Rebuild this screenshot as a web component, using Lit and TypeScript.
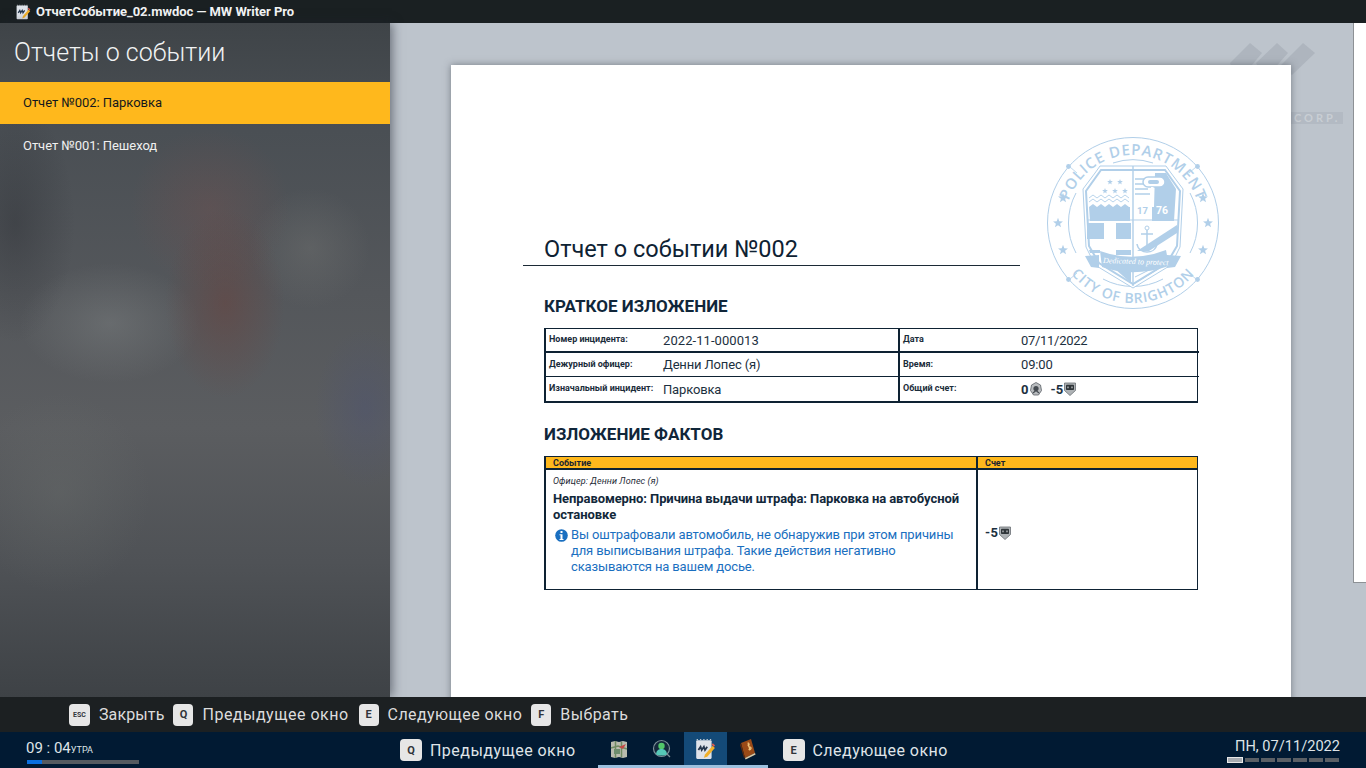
import { LitElement, html, css, svg } from "lit";
import { customElement } from "lit/decorators.js";

const BLUE = "#b1cfe9";

const docIcon = (s: number) => html`<svg width=${s} height=${s} viewBox="0 0 20 20">
  <rect x="2" y="2" width="14" height="17" rx="1" fill="#dfe3ea"/>
  <path d="M3 2v-1M6 2v-1M9 2v-1M12 2v-1M15 2v-1" stroke="#c5cbd2" stroke-width="1.2"/>
  <path d="M4 11l2-3 1 3 2-3 1 3 2-3" fill="none" stroke="#26374d" stroke-width="1.6"/>
  <path d="M9 18l1-3 7-8 2 2-7 8z" fill="#f1b02a"/>
  <path d="M16 6l1.2-1.2 2 2L18 8z" fill="#e25a4c"/>
</svg>`;

const mapIcon = html`<svg width="18" height="20" viewBox="0 0 18 20">
  <path d="M1 3l4-1 4 1 4-1 4 1v15l-4 1-4-1-4 1-4-1z" fill="#b9bbae"/>
  <path d="M1 9l7-2 9 3M5.500 2v17M11.500 3v15" stroke="#6f8a62" stroke-width="1.500" fill="none"/>
  <path d="M4 10h6v5h-6z" fill="#6d8c6d"/>
  <path d="M9 8l7-3-3 5z" fill="#c64a45"/>
</svg>`;

const personIcon = html`<svg width="20" height="20" viewBox="0 0 20 20">
  <circle cx="9.500" cy="9.500" r="8" fill="#14283c" stroke="#7d8e98" stroke-width="1.200"/>
  <circle cx="9.500" cy="7" r="3.200" fill="#52c66a"/>
  <path d="M4 15c.5-4 3-5 5.500-5s5 1 5.500 5c-2 2-9 2-11 0z" fill="#56c8b8"/>
  <path d="M15 15l3 3" stroke="#7d8e98" stroke-width="1.200"/>
</svg>`;

const bookIcon = html`<svg width="18" height="22" viewBox="0 0 18 22">
  <path d="M2 5l10-4 4 14-10 5z" fill="#9a4a17"/>
  <path d="M2 5l4 15-1 0-4-13z" fill="#5e2a0e"/>
  <path d="M6 20l10-5 .6 1.500-10 5z" fill="#d9c9a6"/>
  <path d="M11 6c-3 0-2 2.500 0 3s1 3-1.500 2.500M9 4.500l2 8" stroke="#f0c27a" stroke-width="1.200" fill="none"/>
</svg>`;

const badgeAlt = html`<svg class="mini" width="12" height="14" viewBox="0 0 12 14">
  <path d="M6 .5l4.500 2.500 1 5.500-3 4.500h-5l-3-4.500 1-5.500z" fill="#b9bcbf" stroke="#5b6167" stroke-width=".8"/>
  <circle cx="6" cy="6.500" r="2.600" fill="#454b51"/>
  <path d="M3 11l3-2.500 3 2.500" stroke="#454b51" stroke-width="1.200" fill="none"/>
</svg>`;

const shieldBadge = html`<svg class="mini" width="12" height="14" viewBox="0 0 12 14">
  <path d="M.5 1h11v7.500l-5.500 5-5.500-5z" fill="#aeb2b5" stroke="#6b7075" stroke-width=".8"/>
  <rect x="2" y="2.800" width="8" height="5.200" rx=".8" fill="#2f3539"/>
  <path d="M4 4.500v1.800M8 4.500v1.800" stroke="#d8dadc" stroke-width="1.100"/>
</svg>`;

const star = (x: number, y: number, r: number) => {
  const pts: string[] = [];
  for (let i = 0; i < 10; i++) {
    const a = -Math.PI / 2 + (i * Math.PI) / 5;
    const rr = i % 2 ? r * 0.42 : r;
    pts.push(`${(x + rr * Math.cos(a)).toFixed(2)},${(y + rr * Math.sin(a)).toFixed(2)}`);
  }
  return svg`<polygon points=${pts.join(" ")} fill=${BLUE}/>`;
};

const seal = html`<svg class="seal" width="174" height="174" viewBox="-87 -87 174 174">
  <defs>
    <path id="topArc" d="M -68 0 A 68 68 0 0 1 68 0"/>
    <path id="botArc" d="M -80 0 A 80 80 0 0 0 80 0"/>
  </defs>
  <circle r="85.500" fill="#fff" stroke=${BLUE} stroke-width="1"/>
  <path d="M -57 -30 A 63.500 63.500 0 0 0 -57 30 M 57 -30 A 63.500 63.500 0 0 1 57 30 M -20 -60 A 63 63 0 0 1 20 -60 M -30 56 A 64 64 0 0 0 30 56"
    fill="none" stroke=${BLUE} stroke-width="1"/>
  <path d="M -63 -56 L -56 -50 M 63 -56 L 56 -50 M -63 56 L -56 50 M 63 56 L 56 50" stroke=${BLUE} stroke-width=".8"/>
  ${[[-64.500, -56.500], [64.500, -56.500], [-64.500, 56.500], [64.500, 56.500]].map(
    ([x, y]) => svg`<circle cx=${x} cy=${y} r="2.400" fill=${BLUE}/>`
  )}
  ${[[-70, -25], [-75, 0], [-70, 27], [70, -25], [75, 0], [70, 27]].map(([x, y]) => star(x, y, 5.200))}
  <text class="ring" font-size="15"><textPath href="#topArc" startOffset="50%" text-anchor="middle">POLICE DEPARTMENT</textPath></text>
  <text class="ring" font-size="14"><textPath href="#botArc" startOffset="50%" text-anchor="middle">CITY OF BRIGHTON</textPath></text>

  <path d="M -33 -57 H 33 L 38 -50 L 50 -34 L 47 24 L 38 42 L 0 65 L -38 42 L -47 24 L -50 -34 L -38 -50 Z" fill="#fff" stroke=${BLUE} stroke-width="1"/>
  <path d="M -32 -53 H 32 L 47 -32 L 44 23 L 34 40 L 0 61 L -34 40 L -44 23 L -47 -32 Z" fill="none" stroke=${BLUE} stroke-width="2"/>

  <path d="M -44 -16 l 4 -3 4 3 4 -3 4 3 4 -3 4 3 4 -3 4 3 4 -3 4 3 1 0 V -2 H -43 Z" fill=${BLUE}/>
  <path d="M -44 -21 l 4 -3 4 3 4 -3 4 3 4 -3 4 3 4 -3 4 3 4 -3 4 3 M -44 -25 l 4 -3 4 3 4 -3 4 3 4 -3 4 3 4 -3 4 3 4 -3 4 3" fill="none" stroke=${BLUE} stroke-width=".9"/>
  ${[[-23, -41], [-13, -41], [-28, -32], [-18, -32], [-8, -32]].map(([x, y]) => star(x, y, 3))}
  <path d="M 0 -57 V 63" stroke=${BLUE} stroke-width="1.400"/>
  <path d="M -45 -3 H 45" stroke=${BLUE} stroke-width="1.200"/>
  <path d="M 22 -50 H 33 L 43 -34 L 41 -2 H 19 V -16 H 21 Z" fill=${BLUE}/>
  <path d="M 2 -44 H 14 M 2 -39 H 13 M 2 -34 H 15 M 2 -29 H 17" stroke=${BLUE} stroke-width="1.300"/>
  <rect x="10" y="-46" width="22" height="10" rx="5" fill="#fff" stroke=${BLUE} stroke-width="1.500"/>
  <rect x="15" y="-43" width="11" height="4" rx="2" fill=${BLUE}/>
  <rect x="18" y="-36" width="2.500" height="10" fill="#fff"/>
  <text class="yr" x="4" y="-9" font-size="9.500" fill=${BLUE}>17</text>
  <text class="yr" x="23" y="-9" font-size="10.500" fill="#fff">76</text>
  ${[[-46, 0, 17, 16], [-17, 0, 15, 16]].map(
    ([x, y, w, h]) => svg`<rect x=${x} y=${y} width=${w} height=${h} fill=${BLUE}/>`
  )}
  <path d="M -17 27 H -2 V 32 H -17 Z M -44 27 L -33 27 L -33 30 L -43 30 Z" fill=${BLUE}/>
  <path d="M 4 28 L 44 2 L 44 10 L 16 28 Z" fill=${BLUE}/>
  <circle cx="14" cy="5" r="2" fill="#fff" stroke=${BLUE} stroke-width="1"/>
  <path d="M 14 7 V 27 M 8 11 H 20 M 4 21 C 5 27 10 29 14 29 C 18 29 23 27 24 21" fill="none" stroke=${BLUE} stroke-width="1.500"/>
  <path d="M -18 46 L -2 47 L -2 60 Z" fill=${BLUE}/>
  <path d="M 2 60 L 30 43 M 2 54 L 22 44" fill="none" stroke=${BLUE} stroke-width="1"/>
  <path d="M -48 33 L -34 32 L -34 45 L -42 44 Z M 48 33 L 34 32 L 34 45 L 42 44 Z" fill=${BLUE}/>
  <path d="M -33 28 Q 0 40 33 27 L 36 43 Q 0 55 -31 44 Z" fill=${BLUE}/>
  <text class="motto" x="-30" y="41" font-size="8" fill="#fff" transform="rotate(2 0 40)">Dedicated to protect</text>
</svg>`;

@customElement("app-root")
export class AppRoot extends LitElement {
  static styles = css`
    :host { display: block; width: 1366px; height: 768px; overflow: hidden; font-family: Roboto, "Liberation Sans", sans-serif; }
    .app { display: flex; flex-direction: column; height: 768px; }
    .title { height: 23px; flex: none; background: #1a2022; color: #f3f4f5; display: flex; align-items: center; font-size: 13px; font-weight: 700; padding-left: 15px; gap: 5px; letter-spacing: -.04px; }
    .title svg { width: 16px; height: 16px; }
    .body { flex: 1; display: flex; min-height: 0; position: relative; }
    .side { width: 390px; flex: none; z-index: 1; box-shadow: 2px 0 10px rgba(30,35,45,.55); display: flex; flex-direction: column; color: #fff;
      background:
        radial-gradient(ellipse 60px 95px at 225px 280px, rgba(110,62,55,.42), transparent),
        radial-gradient(ellipse 80px 80px at 210px 185px, rgba(125,80,76,.3), transparent),
        radial-gradient(ellipse 90px 60px at 110px 300px, rgba(145,150,150,.3), transparent),
        radial-gradient(ellipse 60px 60px at 310px 225px, rgba(135,135,130,.24), transparent),
        radial-gradient(ellipse 50px 80px at 365px 385px, rgba(75,82,115,.42), transparent),
        radial-gradient(ellipse 90px 100px at 60px 470px, rgba(120,125,120,.22), transparent),
        radial-gradient(ellipse 60px 120px at 15px 200px, rgba(30,32,38,.3), transparent),
        linear-gradient(180deg, #3f4448 0%, #4a4f54 16%, #54575b 40%, #5b5d60 60%, #4f5256 80%, #3e4246 100%);
    }
    .side h1 { margin: 0; font-weight: 300; font-size: 25px; line-height: 59px; padding-left: 14px; color: #f1f3f4; }
    .item { height: 42px; padding: 0 0 2px 23px; box-sizing: border-box; display: flex; align-items: center; font-size: 13px; letter-spacing: -.04px; color: #f0f0f0; }
    .item.on { background: #ffb81c; color: #14181c; }
    .item + .item { height: 44px; }
    .main { flex: 1; background: #bdc4cc; position: relative; overflow: hidden; }
    .logo { position: absolute; left: 835px; top: 20px; }
    .corp { position: absolute; left: 901px; top: 89px; width: 52px; box-sizing: border-box; background: #b3bac3; color: #c9ced4; font: 700 11px Lato, Roboto, sans-serif; letter-spacing: 3px; padding-left: 3px; height: 12px; line-height: 12px; white-space: nowrap; overflow: hidden; }
    .scroll { position: absolute; right: 0; top: 0; width: 13px; height: 560px; background: #fff; border-left: 1px solid #8d9195; border-bottom: 1px solid #8d9195; box-sizing: border-box; }
    .page { position: absolute; left: 61px; top: 42px; width: 840px; height: 700px; background: #fff; box-shadow: 0 0 7px rgba(60,65,75,.55); color: #0e2233; box-sizing: border-box; padding: 0 93px; }
    .seal { position: absolute; left: 595px; top: 71px; }
    .ring { font-family: "Open Sans", Lato, Roboto, sans-serif; font-weight: 600; fill: #b1cfe9; letter-spacing: .8px; }
    .yr { font-family: Roboto, sans-serif; font-weight: 700; }
    .motto { font-family: "Liberation Serif", serif; font-style: italic; }
    .doc-title { position: relative; margin: 0 0 0 -21px; padding: 168px 0 0 21px; width: 476px; height: 32px; border-bottom: 1px solid #1c2a36; font-size: 23.500px; font-weight: 400; line-height: 32px; box-sizing: content-box; }
    h2 { margin: 0; font-size: 17px; line-height: 20px; font-weight: 700; color: #10263a; }
    h2.h1 { margin-top: 30px; }
    h2.h2 { margin-top: 21px; }
    .tbl { display: grid; grid-template-columns: 352px 301px; width: 654px; box-sizing: border-box; margin-top: 12px; border-style: solid; border-color: #0e2233; border-width: 1px 1px 2px 2px; grid-template-rows: 24px 24px 24px; }
    .cell { display: grid; grid-template-columns: 114px 1fr; align-items: center; border-bottom: 1px solid #0e2233; padding-left: 3px; min-width: 0; }
    .cell.r { grid-template-columns: 118px 1fr; border-left: 2px solid #0e2233; padding-left: 3px; }
    .cell.t2 { border-bottom-width: 2px; height: 24px; box-sizing: border-box; }
    .cell.last { border-bottom: 0; }
    .k { font-size: 9px; font-weight: 700; color: #1a2c3a; position: relative; top: -1px; white-space: nowrap; }
    .v { font-size: 13px; color: #1c3040; display: flex; align-items: center; letter-spacing: -.15px; }
    .v.n { letter-spacing: .07px; }
    .v.d { letter-spacing: -.3px; }
    .score { font-weight: 700; letter-spacing: .1px; }
    .mini { margin: 0 0 0 1px; }
    .gap { width: 9px; }
    .ev { margin-top: 12px; width: 654px; box-sizing: border-box; border: 1px solid #0e2233; border-left-width: 2px; display: grid; grid-template-columns: 430px 1fr; grid-template-rows: 13px 119px; }
    .hd { background: #ffb81c; font-size: 9px; font-weight: 700; color: #1a2430; display: flex; align-items: center; padding-left: 7px; border-bottom: 2px solid #0e2233; box-sizing: content-box; height: 11px; }
    .hd.r { border-left: 2px solid #0e2233; }
    .ec { padding: 5px 7px 0; box-sizing: border-box; }
    .ec.r { border-left: 2px solid #0e2233; padding: 6px 0 0 7px; display: flex; align-items: center; font-size: 13px; font-weight: 700; color: #1c3040; letter-spacing: .4px; }
    .who { font-size: 9px; font-style: italic; color: #1f2c38; line-height: 12px; letter-spacing: .1px; }
    .ttl { font-size: 13px; font-weight: 700; line-height: 16px; margin-top: 4px; color: #12283a; letter-spacing: -.09px; }
    .note { display: flex; margin-top: 4px; color: #1a6fc0; font-size: 13px; line-height: 16px; letter-spacing: -.14px; }
    .note svg { flex: none; margin: 2px 3px 0 2px; }
    .hints { height: 35px; flex: none; background: #1c2022; display: flex; align-items: center; padding-left: 69px; color: #dcdcdc; font-size: 16px; letter-spacing: .42px; z-index: 2; }
    .key { flex: none; width: 20px; height: 22px; box-sizing: border-box; background: #e6e6e6; border-radius: 4px; color: #30343a; font-size: 11px; font-weight: 700; letter-spacing: 0; display: flex; align-items: center; justify-content: center; }
    .key.esc { font-size: 7px; width: 21px; }
    .hints .key { margin-right: 9px; }
    .hints span { margin-right: 9px; white-space: nowrap; }
    .hints span.close { letter-spacing: .12px; }
    .hints span.prev { letter-spacing: .5px; margin-right: 10px; }
    .task { height: 36px; flex: none; background: #011a33; color: #dfe4e8; display: grid; grid-template-columns: 398px 1fr 226px; z-index: 2; }
    .clock { padding: 8px 0 0 26px; font-size: 15px; line-height: 17px; }
    .clock small { font-size: 9px; }
    .pbar { width: 112px; height: 4px; background: #555a60; margin: 1px 0 0 1px; }
    .pbar i { display: block; width: 15px; height: 4px; background: #0a6fe0; }
    .mid { display: flex; align-items: center; font-size: 16px; letter-spacing: .46px; position: relative; padding-left: 2px; }
    .mid .t { white-space: nowrap; }
    .mid .key { margin-right: 8px; width: 22px; }
    .apps { display: flex; margin: 0 15px 0 22px; border-bottom: 3px solid #9cc0de; height: 36px; box-sizing: border-box; width: 170px; }
    .app-i { width: 43px; display: flex; align-items: center; justify-content: center; flex: none; }
    .app-i.on { background: #144a78; }
    .app-i svg { display: block; }
    .date { padding: 6px 26px 0 0; text-align: right; font-size: 14.600px; line-height: 17px; }
    .segs { display: flex; gap: 2px; justify-content: flex-end; align-items: center; margin: 2px 1px 0 0; }
    .segs i { width: 14px; height: 4px; background: #5a5f65; }
    .segs i.on { width: 16px; height: 6px; background: #a8acb2; outline: 1px solid #e8e8e8; outline-offset: -1px; }
  `;

  render() {
    return html`<div class="app">
      <div class="title">${docIcon(16)}<span>ОтчетСобытие_02.mwdoc — MW Writer Pro</span></div>
      <div class="body">
        <aside class="side">
          <h1>Отчеты о событии</h1>
          <div class="item on">Отчет №002: Парковка</div>
          <div class="item">Отчет №001: Пешеход</div>
        </aside>
        <main class="main">
          <svg class="logo" width="100" height="60" viewBox="0 0 100 60" fill="#aeb5be">
            <path d="M5 20 L25 0 L37 10 L12 40 Z"/><path d="M31 20 L52 0 L63 10 L40 36 Z"/><path d="M56 22 L78 0 L90 10 L67 32 Z"/>
          </svg>
          <div class="corp">CORP.</div>
          <div class="scroll"></div>
          <div class="page">
            ${seal}
            <h1 class="doc-title">Отчет о событии №002</h1>
            <h2 class="h1">КРАТКОЕ ИЗЛОЖЕНИЕ</h2>
            <div class="tbl">
              <div class="cell t2"><div class="k">Номер инцидента:</div><div class="v n">2022-11-000013</div></div>
              <div class="cell r t2"><div class="k">Дата</div><div class="v d">07/11/2022</div></div>
              <div class="cell"><div class="k">Дежурный офицер:</div><div class="v">Денни Лопес (я)</div></div>
              <div class="cell r"><div class="k">Время:</div><div class="v">09:00</div></div>
              <div class="cell last"><div class="k">Изначальный инцидент:</div><div class="v">Парковка</div></div>
              <div class="cell r last"><div class="k">Общий счет:</div><div class="v score">0${badgeAlt}<i class="gap"></i>-5${shieldBadge}</div></div>
            </div>
            <h2 class="h2">ИЗЛОЖЕНИЕ ФАКТОВ</h2>
            <div class="ev">
              <div class="hd">Событие</div>
              <div class="hd r">Счет</div>
              <div class="ec">
                <div class="who">Офицер: Денни Лопес (я)</div>
                <div class="ttl">Неправомерно: Причина выдачи штрафа: Парковка на автобусной остановке</div>
                <div class="note">
                  <svg width="13" height="13" viewBox="0 0 13 13"><circle cx="6.500" cy="6.500" r="6.300" fill="#1a6fc0"/><rect x="5.500" y="2" width="2" height="2" fill="#fff"/><path d="M4.500 5.200H7.500V10H8.500V11H4.500V10H5.500V6.200H4.500Z" fill="#fff"/></svg>
                  <div>Вы оштрафовали автомобиль, не обнаружив при этом причины для выписывания штрафа. Такие действия негативно сказываются на вашем досье.</div>
                </div>
              </div>
              <div class="ec r">-5${shieldBadge}</div>
            </div>
          </div>
        </main>
      </div>
      <div class="hints">
        <div class="key esc">ESC</div><span class="close">Закрыть</span>
        <div class="key">Q</div><span class="prev">Предыдущее окно</span>
        <div class="key">E</div><span>Следующее окно</span>
        <div class="key">F</div><span>Выбрать</span>
      </div>
      <div class="task">
        <div class="clock">09 : 04<small>УТРА</small><div class="pbar"><i></i></div></div>
        <div class="mid">
          <div class="key">Q</div><span class="t">Предыдущее окно</span>
          <div class="apps">
            <div class="app-i">${mapIcon}</div>
            <div class="app-i">${personIcon}</div>
            <div class="app-i on">${docIcon(22)}</div>
            <div class="app-i">${bookIcon}</div>
          </div>
          <div class="key">E</div><span class="t">Следующее окно</span>
        </div>
        <div class="date">ПН, 07/11/2022<div class="segs"><i class="on"></i><i></i><i></i><i></i><i></i><i></i><i></i></div></div>
      </div>
    </div>`;
  }
}
